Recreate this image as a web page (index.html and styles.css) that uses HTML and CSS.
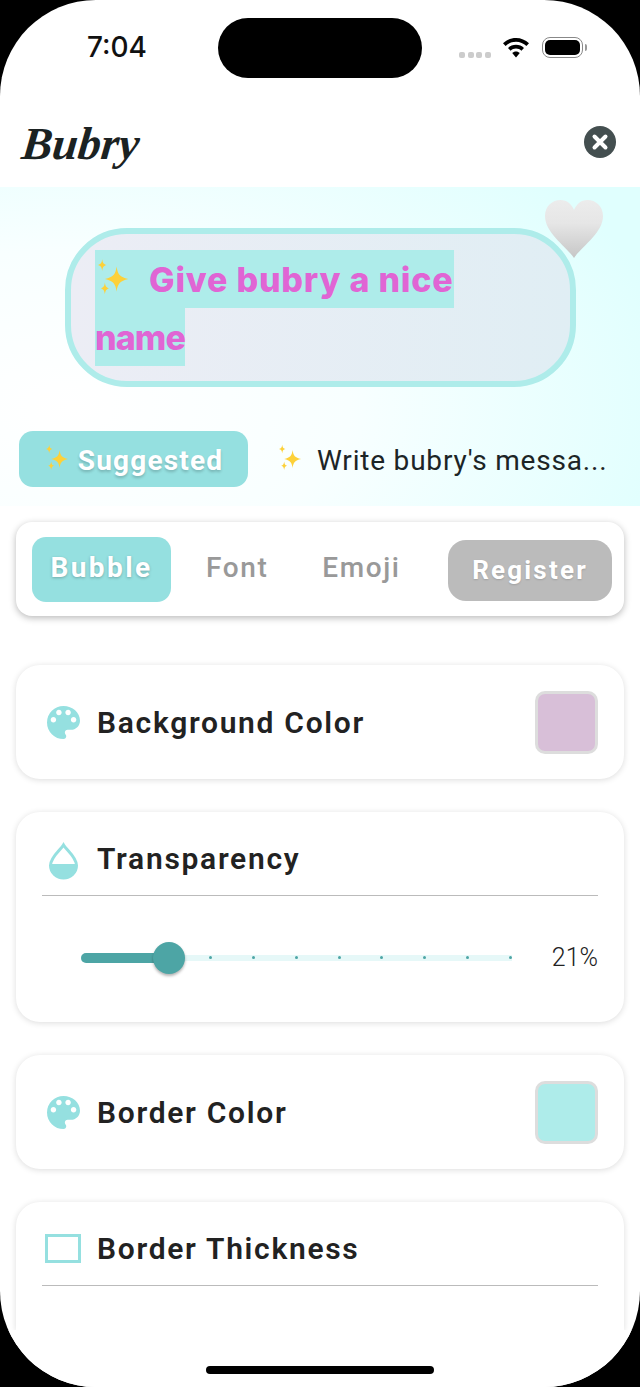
FILE: index.html

```html
<!DOCTYPE html>
<html lang="en">
<head>
  <meta charset="UTF-8" />
  <meta name="viewport" content="width=device-width, initial-scale=1" />
  <title>Bubry</title>
  <link rel="stylesheet" href="styles.css">
</head>
<body>

  <svg class="defs" width="0" height="0">
    <defs>
      <symbol id="sparkles" viewBox="0 0 40 44">
        <path fill="#fdd139" d="M24 8c1.2 9 3.600 11.500 13 14-9.400 2.500-11.800 5-13 14-1.200-9-3.600-11.500-13-14 9.400-2.500 11.800-5 13-14z"/>
        <path fill="#fdd139" d="M8 0c.6 4.400 1.500 5.400 5 6.500-3.500 1.100-4.400 2.100-5 6.500-.6-4.400-1.500-5.400-5-6.500 3.500-1.100 4.400-2.100 5-6.500z"/>
        <path fill="#fdd139" d="M11 26c.6 4.300 1.500 5.500 4.500 6.500-3 1-3.900 2.200-4.500 6.500-.6-4.300-1.500-5.500-4.500-6.500 3-1 3.900-2.200 4.500-6.500z"/>
      </symbol>
      <symbol id="palette" viewBox="3 3 18 18">
        <path d="M12 3a9 9 0 0 0 0 18c.83 0 1.500-.67 1.500-1.500 0-.39-.15-.74-.39-1.010-.23-.26-.38-.61-.38-.99 0-.83.67-1.500 1.500-1.500H16c2.760 0 5-2.240 5-5 0-4.420-4.030-8-9-8zm-5.500 9c-.83 0-1.500-.67-1.500-1.500S5.670 9 6.500 9 8 9.670 8 10.500 7.330 12 6.500 12zm3-4C8.670 8 8 7.330 8 6.500S8.670 5 9.500 5s1.500.67 1.500 1.500S10.330 8 9.500 8zm5 0c-.83 0-1.500-.67-1.500-1.500S13.670 5 14.500 5s1.500.67 1.500 1.500S15.330 8 14.500 8zm3 4c-.83 0-1.500-.67-1.500-1.500S16.670 9 17.500 9s1.500.67 1.500 1.500-.67 1.500-1.500 1.500z"/>
      </symbol>
      <linearGradient id="heartfill" x1="0" y1="0" x2="0" y2="1">
        <stop offset="0" stop-color="#ececec"/>
        <stop offset="0.4" stop-color="#e6e6e6"/>
        <stop offset="1" stop-color="#c6c6c6"/>
      </linearGradient>
    </defs>
  </svg>

  <div class="screen">

    <div class="status-bar">
      <div class="time">7:04</div>
      <div class="island"></div>
      <div class="signal"><i></i><i></i><i></i><i></i></div>
      <svg class="wifi" width="26" height="20" viewBox="0 0 26 20">
        <path d="M13 0C8 0 3.500 2 0 5.300l2.600 2.800C5.400 5.400 9 3.800 13 3.800s7.600 1.600 10.400 4.300L26 5.300C22.500 2 18 0 13 0z"/>
        <path d="M13 6.800c-3.100 0-5.900 1.200-8 3.200l2.600 2.800c1.400-1.300 3.300-2.200 5.400-2.200s4 .9 5.400 2.200l2.600-2.800c-2.100-2-4.900-3.200-8-3.200z"/>
        <path d="M13 13.400c-1.500 0-2.800.6-3.800 1.500L13 19.500l3.800-4.600c-1-.9-2.300-1.500-3.800-1.500z"/>
      </svg>
      <div class="battery"><div class="battery-level"></div></div>
      <div class="battery-cap"></div>
    </div>

    <header class="app-header">
      <div class="logo">Bubry</div>
      <svg class="close" width="32" height="32" viewBox="0 0 32 32">
        <circle cx="16" cy="16" r="16" fill="#444f50"/>
        <path d="M10.500 10.500l11 11M21.500 10.500l-11 11" stroke="#fff" stroke-width="4" stroke-linecap="round"/>
      </svg>
    </header>

    <section class="hero">
      <div class="bubble">
        <div class="bubble-text">
          <span class="mark"><svg class="spark-big" width="36" height="40"><use href="#sparkles"/></svg> Give bubry a nice</span>
          <span class="mark mark-short">name</span>
        </div>
        <svg class="heart" width="60" height="60" viewBox="0 0 60 60">
          <path fill="url(#heartfill)" d="M30 59C22 47 1 34 1 17 1 7 8.500 1 16.500 1 23 1 27.500 5 30 11 32.500 5 37 1 43.500 1 51.500 1 59 7 59 17 59 34 38 47 30 59z"/>
        </svg>
      </div>
      <div class="suggest-row">
        <div class="suggest-tab active"><svg width="26" height="30"><use href="#sparkles"/></svg> <span class="suggest-label">Suggested</span></div>
        <div class="suggest-tab"><svg width="26" height="30"><use href="#sparkles"/></svg> <span class="suggest-label">Write bubry's messa...</span></div>
      </div>
    </section>

    <main class="options">
      <nav class="tabs">
        <a class="tab active">Bubble</a>
        <a class="tab tab-font">Font</a>
        <a class="tab tab-emoji">Emoji</a>
        <button class="register">Register</button>
      </nav>

      <div class="card row-card bg-card">
        <div class="card-title">
          <svg class="icon" width="33" height="33"><use href="#palette"/></svg>
          <span>Background Color</span>
        </div>
        <div class="swatch swatch-thistle"></div>
      </div>

      <div class="card transparency-card">
        <div class="card-title head">
          <svg class="icon drop-icon" width="33" height="38" viewBox="0 0 33 38">
            <path d="M16.500 3C13.500 8 3.500 15 3.500 23.500 3.500 30.500 9.500 36 16.500 36S29.500 30.500 29.500 23.500C29.500 15 19.500 8 16.500 3z" fill="none" stroke="#95e0e0" stroke-width="3"/>
            <path d="M3 22h27v2c0 7-6 13-13.500 13S3 31 3 24z" fill="#95e0e0"/>
          </svg>
          <span>Transparency</span>
        </div>
        <div class="slider-row">
          <div class="slider">
            <div class="slider-fill"></div>
            <div class="slider-dots"><i></i><i></i><i></i><i></i><i></i><i></i><i></i><i></i></div>
            <div class="slider-thumb"></div>
          </div>
          <div class="slider-value">21%</div>
        </div>
      </div>

      <div class="card row-card">
        <div class="card-title">
          <svg class="icon" width="33" height="33"><use href="#palette"/></svg>
          <span>Border Color</span>
        </div>
        <div class="swatch swatch-aqua"></div>
      </div>

      <div class="card thickness-card">
        <div class="card-title head">
          <div class="square-icon"></div>
          <span>Border Thickness</span>
        </div>
      </div>
    </main>

    <footer class="home-area"><div class="home-bar"></div></footer>
  </div>

</body>
</html>
```

FILE: styles.css

```css
html, body {
  margin: 0;
  background: #000;
}
.defs {
  position: absolute;
}
.screen {
  width: 640px;
  height: 1387px;
  background: #fff;
  border-radius: 96px;
  overflow: hidden;
  display: flex;
  flex-direction: column;
  font-family: Roboto, "Liberation Sans", sans-serif;
  color: #222;
}

/* status bar */
.status-bar {
  height: 96px;
  flex: none;
  box-sizing: border-box;
  padding: 18px 0 0 87px;
  display: flex;
  align-items: flex-start;
}
.time {
  width: 131px;
  margin-top: 13px;
  font-family: Inter, sans-serif;
  font-size: 28px;
  font-weight: 500;
  line-height: 33px;
  color: #111;
}
.island {
  width: 204px;
  height: 60px;
  border-radius: 30px;
  background: #000;
}
.signal {
  display: flex;
  gap: 2.600px;
  margin: 34px 0 0 37px;
}
.signal i {
  width: 6px;
  height: 6px;
  border-radius: 2px;
  background: #ccc;
}
.wifi {
  margin: 20px 0 0 12px;
}
.battery {
  box-sizing: border-box;
  width: 41px;
  height: 21px;
  margin: 19px 0 0 13px;
  padding: 2px;
  border: 1px solid #888;
  border-radius: 8px;
}
.battery-level {
  height: 100%;
  background: #000;
  border-radius: 5px;
}
.battery-cap {
  width: 2px;
  height: 7px;
  margin: 26px 0 0 2px;
  background: #999;
  border-radius: 0 2px 2px 0;
}

/* header */
.app-header {
  height: 91px;
  flex: none;
  box-sizing: border-box;
  padding: 0 24px 0 22px;
  display: flex;
  justify-content: space-between;
  align-items: center;
}
.logo {
  font-family: "Liberation Serif", serif;
  font-style: italic;
  font-weight: bold;
  font-size: 46px;
  line-height: 54px;
  color: #1b2222;
  margin-top: 4px;
  transform: skewX(-6deg);
}
.close {
  margin-top: 1px;
}

/* preview */
.hero {
  height: 319px;
  flex: none;
  box-sizing: border-box;
  padding: 41px 0 0;
  background: radial-gradient(ellipse 620px 350px at 70px 220px, #fff 0, #f8ffff 45%, #e0fffe 100%);
}
.bubble {
  position: relative;
  box-sizing: border-box;
  width: 511px;
  height: 159px;
  margin-left: 65px;
  padding: 16px 24px;
  border: 6px solid #aeecea;
  border-radius: 62px;
  background: linear-gradient(90deg, #ecedf5, #e0eef4);
}
.bubble-text {
  display: flex;
  flex-direction: column;
  align-items: flex-start;
}
.mark {
  display: flex;
  align-items: center;
  gap: 18px;
  height: 58px;
  background: #aeecea;
  font-family: Inter, sans-serif;
  font-size: 34px;
  font-weight: 800;
  letter-spacing: 0.8px;
  color: #e065d4;
  white-space: nowrap;
}
.mark-short {
  letter-spacing: -0.9px;
}
.spark-big {
  flex: none;
  width: 36px;
}
.heart {
  position: absolute;
  top: -35px;
  right: -34px;
}
.suggest-row {
  display: flex;
  align-items: center;
  margin: 44px 0 0 19px;
}
.suggest-tab {
  display: flex;
  align-items: center;
  gap: 8px;
  height: 56px;
  font-size: 28px;
  color: #1c2526;
  white-space: nowrap;
}
.suggest-tab.active {
  box-sizing: border-box;
  width: 229px;
  justify-content: center;
  margin-right: 29px;
  background: #95e0e0;
  border-radius: 14px;
  font-weight: 700;
  color: #fff;
  text-shadow: 0 2px 3px rgba(0,0,0,0.2);
}
.suggest-label {
  margin: 2px 0 0 6px;
  letter-spacing: 0.8px;
}
.active .suggest-label {
  margin-left: 0;
  letter-spacing: 1.2px;
}

/* options */
.options {
  flex: 1;
  min-height: 0;
  overflow: hidden;
  padding: 16px 16px 0;
  display: flex;
  flex-direction: column;
}
.tabs {
  height: 94px;
  flex: none;
  box-sizing: border-box;
  display: flex;
  align-items: center;
  padding: 0 12px 0 16px;
  margin-bottom: 49px;
  background: #fff;
  border-radius: 16px;
  box-shadow: 0 2px 7px rgba(0,0,0,0.28);
}
.tab {
  font-size: 28px;
  font-weight: 500;
  color: #999;
  letter-spacing: 1.6px;
  margin-top: -3px;
}
.tab.active {
  box-sizing: border-box;
  width: 139px;
  height: 65px;
  margin-top: 0;
  padding-bottom: 3px;
  display: flex;
  align-items: center;
  justify-content: center;
  background: #95e0e0;
  border-radius: 14px;
  font-weight: 700;
  letter-spacing: 2.400px;
  color: #fff;
  text-shadow: 0 1px 3px rgba(0,0,0,0.25);
}
.tab-font {
  margin-left: 35px;
}
.tab-emoji {
  margin-left: 54px;
}
.register {
  width: 164px;
  height: 61px;
  margin: 2px 0 0 auto;
  border: none;
  border-radius: 18px;
  background: #bbb;
  font: 700 26px Roboto, sans-serif;
  letter-spacing: 2.200px;
  color: #fff;
  text-shadow: 0 1px 2px rgba(0,0,0,0.15);
}

.card {
  flex: none;
  box-sizing: border-box;
  background: #fff;
  border-radius: 24px;
  box-shadow: 0 1px 6px rgba(0,0,0,0.14);
  margin-bottom: 33px;
}
.row-card {
  height: 114px;
  display: flex;
  justify-content: space-between;
  align-items: center;
  padding: 0 26px 0 31px;
}
.card-title {
  display: flex;
  align-items: center;
  font-size: 30px;
  font-weight: 600;
  letter-spacing: 1.700px;
  color: #222;
}
.icon {
  flex: none;
  width: 33px;
  fill: #95e0e0;
  margin-right: 17px;
}
.drop-icon {
  margin-top: 5px;
}
.swatch {
  box-sizing: border-box;
  width: 63px;
  height: 63px;
  border: 3px solid #ddd;
  border-radius: 10px;
}
.swatch-thistle {
  background: #d8bfd8;
}
.swatch-aqua {
  background: #aeecea;
}

.transparency-card {
  height: 210px;
  padding: 0 26px;
}
.head {
  height: 84px;
  box-sizing: border-box;
  padding: 10px 0 0 5px;
  border-bottom: 1px solid #bbb;
}
.slider-row {
  display: flex;
  align-items: center;
  justify-content: space-between;
  margin-top: 47px;
  padding-left: 39px;
}
.slider {
  position: relative;
  width: 431px;
  height: 10px;
  background: linear-gradient(#e6f8f8, #e6f8f8) center / 100% 6px no-repeat;
}
.slider-fill {
  width: 89px;
  height: 100%;
  background: #4da5a5;
  border-radius: 5px 0 0 5px;
}
.slider-dots {
  position: absolute;
  top: 3.500px;
  left: 128px;
  width: 303px;
  display: flex;
  justify-content: space-between;
}
.slider-dots i {
  width: 3px;
  height: 3px;
  border-radius: 50%;
  background: #4da5a5;
}
.slider-thumb {
  position: absolute;
  top: -11px;
  left: 72px;
  width: 32px;
  height: 32px;
  border-radius: 50%;
  background: #4da5a5;
  box-shadow: 0 2px 3px rgba(0,0,0,0.3);
}
.slider-value {
  font-size: 25px;
  font-weight: 300;
  color: #222;
}

.thickness-card {
  height: 128px;
  padding: 0 26px;
  margin-bottom: 0;
  border-radius: 24px 24px 0 0;
}
.square-icon {
  box-sizing: border-box;
  flex: none;
  width: 36px;
  height: 29px;
  margin: 0 16px 0 -2px;
  border: 3px solid #95e0e0;
}

.home-area {
  height: 57px;
  flex: none;
  background: #fff;
  display: flex;
  justify-content: center;
  align-items: flex-end;
  padding-bottom: 13px;
  box-sizing: border-box;
}
.home-bar {
  width: 228px;
  height: 8px;
  border-radius: 4px;
  background: #000;
}
```
